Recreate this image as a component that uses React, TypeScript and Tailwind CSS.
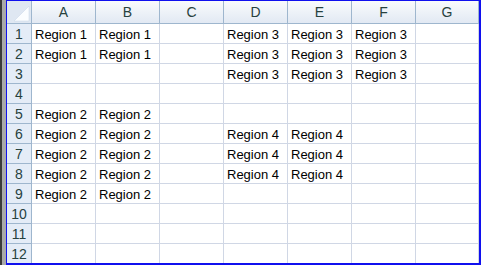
import { Fragment } from "react";

const cols = ["A", "B", "C", "D", "E", "F", "G"];

const data: Record<number, Record<string, string>> = {
  1: { A: "Region 1", B: "Region 1", D: "Region 3", E: "Region 3", F: "Region 3" },
  2: { A: "Region 1", B: "Region 1", D: "Region 3", E: "Region 3", F: "Region 3" },
  3: { D: "Region 3", E: "Region 3", F: "Region 3" },
  5: { A: "Region 2", B: "Region 2" },
  6: { A: "Region 2", B: "Region 2", D: "Region 4", E: "Region 4" },
  7: { A: "Region 2", B: "Region 2", D: "Region 4", E: "Region 4" },
  8: { A: "Region 2", B: "Region 2", D: "Region 4", E: "Region 4" },
  9: { A: "Region 2", B: "Region 2" },
};

const rows = Array.from({ length: 12 }, (_, i) => i + 1);

export default function App() {
  return (
    <div
      className="flex w-[481px] h-[265px] bg-white text-[13px] leading-none"
      style={{ fontFamily: '"Liberation Sans", Arial, sans-serif' }}
    >
      {/* window edge on the left */}
      <div className="w-[2px] h-full bg-[#3a3a3a]" />
      <div className="w-[4px] h-full bg-[#a9a9a9]" />

      <div className="flex-1 border-t border-l border-r-2 border-b-2 border-[#1010ee] overflow-hidden">
        <div className="grid grid-cols-[25px_repeat(6,64px)_63px]">
          {/* corner */}
          <div className="relative h-[23px] bg-[#dfe7f2] border-r border-b border-[#9eb6ce]">
            <svg width="24" height="22" className="absolute left-0 top-0">
              <polygon points="22,5 22,20 7,20" fill="#fbfdff" />
              <polygon points="22,5 22,20 7,20" fill="none" stroke="#c7d4e6" strokeWidth="0.5" />
            </svg>
          </div>
          {cols.map((c) => (
            <div
              key={c}
              className="h-[23px] flex items-center justify-center text-[14px] text-[#27413e] border-r border-b border-[#9eb6ce] bg-gradient-to-b from-[#f9fbfd] to-[#e2e9f3]"
            >
              {c}
            </div>
          ))}

          {rows.map((r) => (
            <Fragment key={r}>
              <div className="h-[20px] flex items-center justify-center text-[14px] text-[#27413e] bg-[#e4ecf7] border-r border-b border-[#9eb6ce]">
                {r}
              </div>
              {cols.map((c) => (
                <div
                  key={c}
                  className="h-[20px] flex items-center pl-[3px] pt-px text-black border-r border-b border-[#d0d7e5] whitespace-nowrap overflow-hidden"
                >
                  {data[r]?.[c] ?? ""}
                </div>
              ))}
            </Fragment>
          ))}
        </div>
      </div>
    </div>
  );
}
